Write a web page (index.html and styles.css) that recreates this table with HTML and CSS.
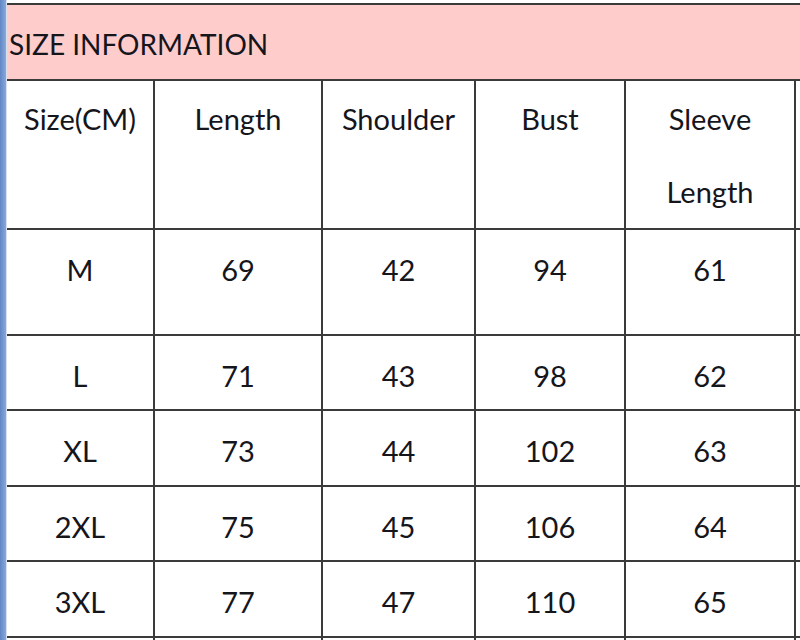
FILE: index.html
```html
<!DOCTYPE html>
<html>
<head>
<meta charset="utf-8">
<link rel="stylesheet" href="styles.css">
</head>
<body>
<div class="page">
  <div class="stripe"></div>
  <div class="sheet">
    <div class="title">SIZE INFORMATION</div>
    <div class="grid">
      <div class="c head">Size(CM)</div>
      <div class="c head">Length</div>
      <div class="c head">Shoulder</div>
      <div class="c head">Bust</div>
      <div class="c head">Sleeve<br>Length</div>
      <div class="c head"></div>

      <div class="c r1">M</div><div class="c r1">69</div><div class="c r1">42</div><div class="c r1">94</div><div class="c r1">61</div><div class="c r1"></div>
      <div class="c r2">L</div><div class="c r2">71</div><div class="c r2">43</div><div class="c r2">98</div><div class="c r2">62</div><div class="c r2"></div>
      <div class="c r3">XL</div><div class="c r3">73</div><div class="c r3">44</div><div class="c r3">102</div><div class="c r3">63</div><div class="c r3"></div>
      <div class="c r2">2XL</div><div class="c r2">75</div><div class="c r2">45</div><div class="c r2">106</div><div class="c r2">64</div><div class="c r2"></div>
      <div class="c r3">3XL</div><div class="c r3">77</div><div class="c r3">47</div><div class="c r3">110</div><div class="c r3">65</div><div class="c r3"></div>
      <div class="c r3"></div><div class="c r3"></div><div class="c r3"></div><div class="c r3"></div><div class="c r3"></div><div class="c r3"></div>
    </div>
  </div>
</div>
</body>
</html>
```
FILE: styles.css
```css
html, body {
  margin: 0;
  padding: 0;
  background: #ffffff;
  overflow: hidden;
}
.page {
  display: flex;
  width: 800px;
  height: 640px;
  overflow: hidden;
}
.stripe {
  width: 6px;
  flex: none;
  background: linear-gradient(to right, #5f86c4, #8aa9d8);
  border-right: 1px solid #d6e0ee;
}
.sheet {
  flex: none;
  width: 820px;
  padding-top: 3px;
  font-family: Lato, "Open Sans", sans-serif;
  font-size: 29px;
  color: #15151c;
}
.title {
  height: 74px;
  line-height: 78px;
  font-size: 28px;
  background: #ffcccc;
  border-top: 2px solid #3a3a3a;
  border-bottom: 2px solid #3a3a3a;
  padding-left: 2px;
}
.grid {
  display: grid;
  grid-template-columns: 148px 168px 153px 150px 170px 31px;
  grid-template-rows: 149px 106px 75px 76px 75px 76px 60px;
}
.c {
  border-right: 2px solid #3a3a3a;
  border-bottom: 2px solid #3a3a3a;
  text-align: center;
  line-height: 74px;
  padding-top: 3px;
  box-sizing: border-box;
}
.head {
  line-height: 73px;
  padding-top: 1px;
}
```
